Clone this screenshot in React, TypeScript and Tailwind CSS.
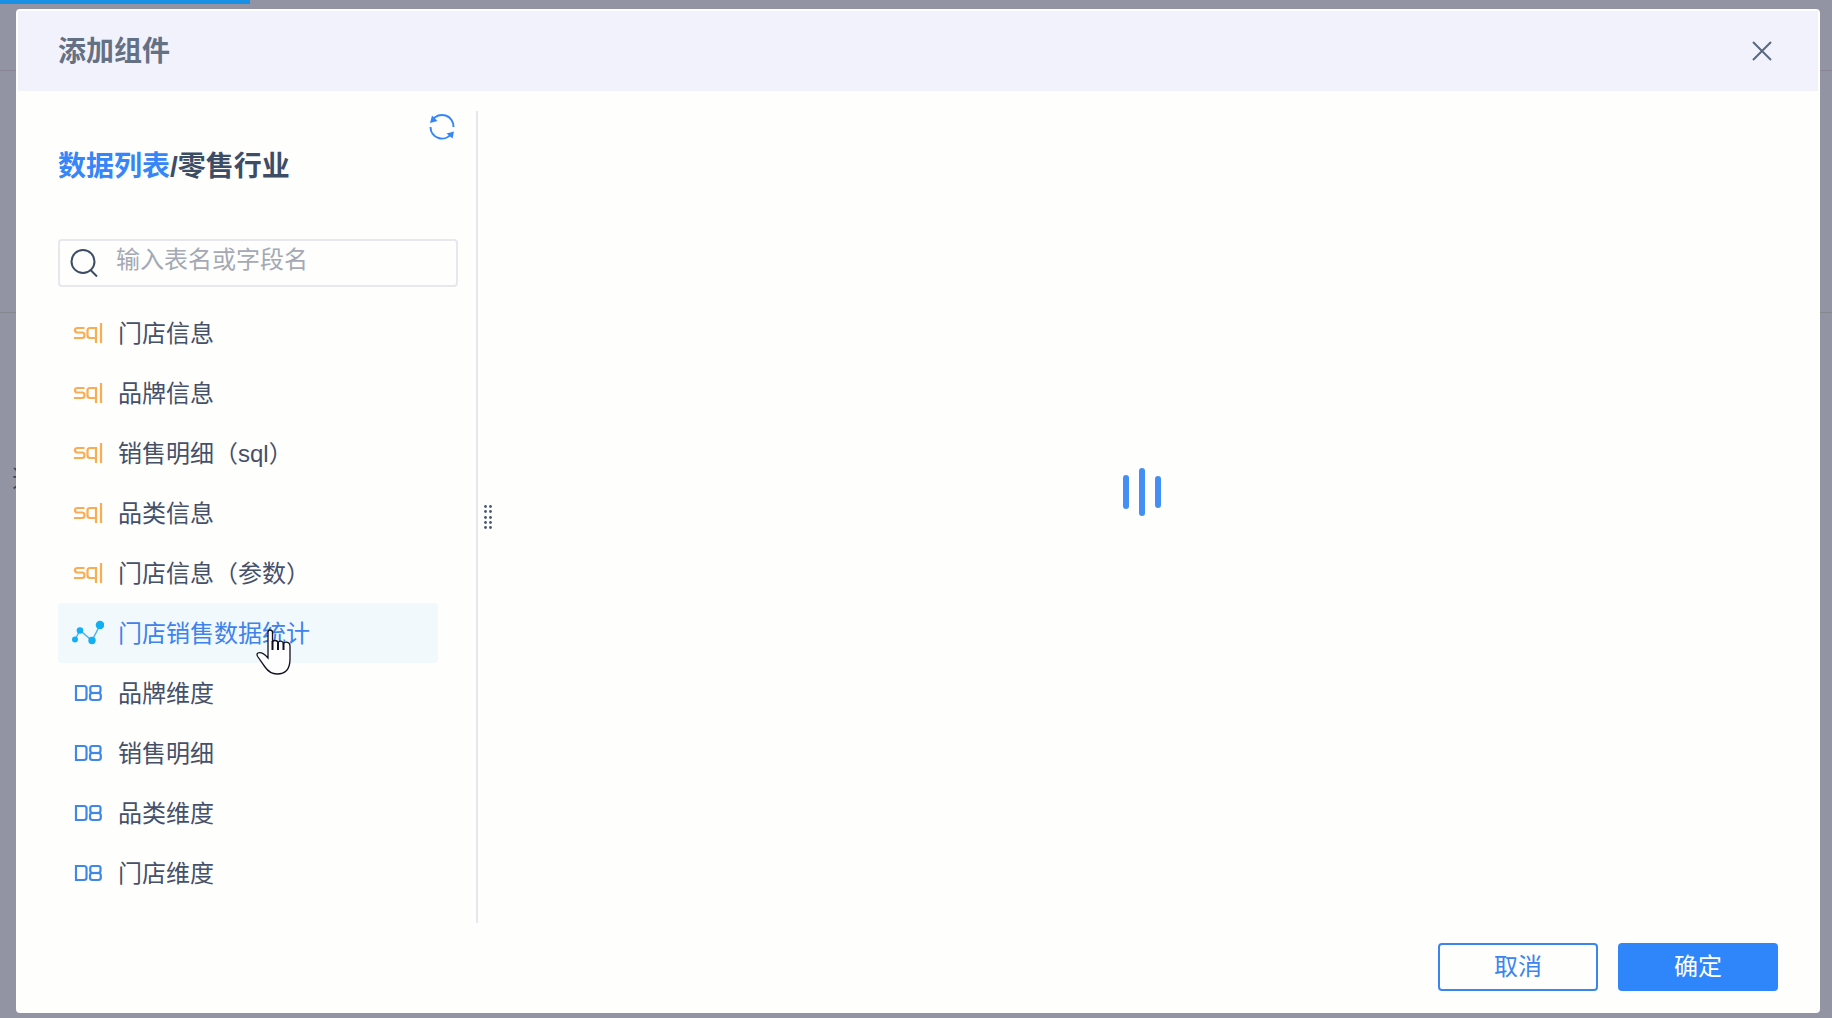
import { useState } from "react";

type SourceType = "sql" | "chart" | "db";

interface DataTable {
    id: number;
    name: string;
    type: SourceType;
}

const tables: DataTable[] = [
    { id: 1, name: "门店信息", type: "sql" },
    { id: 2, name: "品牌信息", type: "sql" },
    { id: 3, name: "销售明细（sql）", type: "sql" },
    { id: 4, name: "品类信息", type: "sql" },
    { id: 5, name: "门店信息（参数）", type: "sql" },
    { id: 6, name: "门店销售数据统计", type: "chart" },
    { id: 7, name: "品牌维度", type: "db" },
    { id: 8, name: "销售明细", type: "db" },
    { id: 9, name: "品类维度", type: "db" },
    { id: 10, name: "门店维度", type: "db" },
];

function SourceIcon({ type }: { type: SourceType }) {
    if (type === "sql") {
        return (
            <svg viewBox="0 0 32 32" className="w-8 h-8" fill="none" stroke="#fbab52" strokeWidth="2.2" aria-hidden="true">
                <path d="M12.5 11H5.5Q3 11 3 13V13.5Q3 15.5 5.5 15.5H10Q12.5 15.5 12.5 18V18.5Q12.5 21 10 21H2" />
                <path d="M24 26V11H18Q15.5 11 15.5 13.5V18.5Q15.5 21 18 21H23" />
                <path d="M29 6V26" />
            </svg>
        );
    }

    if (type === "chart") {
        return (
            <svg viewBox="0 0 32 32" className="w-8 h-8" fill="#12b0f0" aria-hidden="true">
                <path d="M3 22.5L8 13.5L20 23.5L28 8" fill="none" stroke="#4db4f2" strokeWidth="1.5" />
                <circle cx="3" cy="22.5" r="3" />
                <circle cx="8" cy="13.5" r="3.3" />
                <circle cx="20" cy="23.5" r="3.7" />
                <circle cx="28" cy="8" r="4.3" />
            </svg>
        );
    }

    return (
        <svg viewBox="0 0 32 32" className="w-8 h-8" fill="none" stroke="#4088e8" strokeWidth="2.2" aria-hidden="true">
            <path d="M4 9H12Q14.5 9 14.5 11.5V20.5Q14.5 23 12 23H4Z" />
            <path d="M20.5 9H26.5Q28.5 9 28.5 11V13.5Q28.5 16 26 16Q28.8 16 28.8 18.5V20.5Q28.8 23 26.3 23H20.5Q18 23 18 20.5V18.5Q18 16 20.5 16Q18.3 16 18.3 13.5V11Q18.3 9 20.5 9Z" />
            <path d="M20 16H27" />
        </svg>
    );
}

export default function App() {
    const [keyword, setKeyword] = useState("");
    const [selected, setSelected] = useState(6);
    const progress = 250 / 18.32;

    const visible = tables.filter((table) => table.name.includes(keyword));

    return (
        <div className="min-h-screen bg-[#9294a3] font-['Liberation_Sans','Noto_Sans_CJK_SC',sans-serif]">

            {/* page behind the dialog */}
            <div className="h-[71px] border-b border-[#8a8494]"></div>
            <div className="h-[242px] border-b border-[#85878f]"></div>
            <p className="pl-3 pt-[152px] text-2xl leading-7 text-[#3f4352]">选</p>

            <div className="fixed inset-x-0 top-0 h-1 z-20">
                <div className="h-full bg-[#1890e6]" style={{ width: `${progress}%` }}></div>
            </div>

            <div className="fixed inset-0 z-10 flex pl-4 pr-3 pt-[9px] pb-[5px]">
                <div role="dialog" aria-labelledby="dialog-title" className="flex-1 flex flex-col bg-[#fefefd] border-2 border-[#fefefd] rounded">

                    <div className="h-20 shrink-0 flex items-center justify-between pl-10 pr-11 bg-[#f1f2fb]">
                        <h1 id="dialog-title" className="pt-0.5 text-[28px] leading-10 font-bold text-[#647083]">添加组件</h1>
                        <button type="button" aria-label="关闭" className="w-6 h-6">
                            <svg viewBox="0 0 24 24" className="w-6 h-6" fill="none" stroke="#59687f" strokeWidth="2">
                                <path d="M3 3L21 21M21 3L3 21" />
                            </svg>
                        </button>
                    </div>

                    <div className="flex-1 min-h-0 flex pt-5">
                        <aside className="w-[460px] shrink-0 pl-10 pr-[18px] border-r-2 border-[#e7e8ee]">
                            <div className="flex justify-end">
                                <button type="button" aria-label="刷新" className="w-8 h-8 flex items-center justify-center">
                                    <svg viewBox="0 0 32 32" className="w-8 h-8" fill="none" stroke="#3585f8" strokeWidth="2">
                                        <path d="M6.5 9A11.5 11.5 0 0 1 27.5 16" />
                                        <path d="M25.5 22.5A11.5 11.5 0 0 1 4.5 16" />
                                        <path d="M6 4.5L11.5 10L4 12Z" fill="#3585f8" stroke="none" />
                                        <path d="M28 20.5L26.5 27.5L20.5 22.5Z" fill="#3585f8" stroke="none" />
                                    </svg>
                                </button>
                            </div>

                            <h2 className="mt-1 text-[28px] leading-10 font-bold text-[#3d4d66]">
                                <a href="#list" className="text-[#3685f9]">数据列表</a>/零售行业
                            </h2>

                            <div className="mt-13 h-12 flex items-center border-2 border-[#e7e8ee] rounded">
                                <svg viewBox="0 0 32 32" className="w-8 h-8 ml-2 shrink-0" fill="none" stroke="#3d4d66" strokeWidth="2" aria-hidden="true">
                                    <circle cx="15" cy="14.5" r="11.5" />
                                    <path d="M22 22.5L29 29.5" />
                                </svg>
                                <input
                                    type="text"
                                    aria-label="搜索"
                                    value={keyword}
                                    onChange={(e) => setKeyword(e.target.value)}
                                    className="flex-1 min-w-0 h-11 pl-4 pb-1.5 text-2xl leading-9 text-[#3d4d66] placeholder-[#a4a9b5] outline-none"
                                    placeholder="输入表名或字段名"
                                />
                            </div>

                            <ul className="mt-4 mr-5">
                                {visible.map((table) => (
                                    <li key={table.id} className="relative">
                                        <button
                                            type="button"
                                            onClick={() => setSelected(table.id)}
                                            className={`w-full h-[60px] flex items-center gap-3.5 pl-3.5 rounded text-2xl text-left ${selected === table.id ? "bg-[#f2f9fd] text-[#4082ec]" : "text-[#465069]"}`}
                                        >
                                            <SourceIcon type={table.type} />
                                            <span className="pt-0.5">{table.name}</span>
                                        </button>
                                        {selected === table.id && (
                                            <svg viewBox="0 0 36 48" className="absolute left-[198px] top-[25px] w-9 h-12 pointer-events-none" fill="#fefefe" stroke="#111122" strokeWidth="1.3" aria-hidden="true">
                                                <path d="M12 28V4.5Q12 2 14 2Q16.5 2 16.5 4.5V14Q17 12.5 19 12.5Q21.5 12.5 22 14.5Q23 13 25 13.2Q27 13.5 27.5 15.5Q28.5 14 30.5 14.2Q34 14.8 34 18V31Q34 46 21 46Q14 46 9 39L2 29Q0 26 2 25Q6 23.5 12 30Z" />
                                                <path d="M16.5 13V22M22 14V22M27.5 15V22" strokeWidth="2" />
                                            </svg>
                                        )}
                                    </li>
                                ))}
                            </ul>
                        </aside>

                        <button type="button" aria-label="调整宽度" className="w-5 flex items-center justify-center">
                            <svg viewBox="0 0 10 26" className="w-[10px] h-[26px]" fill="#4b5670">
                                {[2, 7, 13, 18, 23].map((y) => (
                                    <g key={y}>
                                        <circle cx="2.5" cy={y + 0.5} r="1.4" />
                                        <circle cx="7.5" cy={y + 0.5} r="1.4" />
                                    </g>
                                ))}
                            </svg>
                        </button>

                        <section aria-label="加载中" className="flex-1 flex items-center justify-center pr-8 pb-[50px]">
                            <svg viewBox="0 0 40 50" className="w-10 h-[50px]" fill="#438ff5" aria-hidden="true">
                                <rect x="1" y="8" width="6" height="34" rx="3" />
                                <rect x="17" y="1" width="6" height="48" rx="3" />
                                <rect x="33" y="9" width="6" height="32" rx="3" />
                            </svg>
                        </section>
                    </div>

                    <div className="shrink-0 flex justify-end gap-5 pt-5 pb-5 pr-10">
                        <button type="button" className="w-40 h-12 border-2 border-[#3d85ee] rounded text-2xl text-[#3d85ee]">取消</button>
                        <button type="button" className="w-40 h-12 bg-[#2f86fb] rounded text-2xl text-white">确定</button>
                    </div>
                </div>
            </div>
        </div>
    );
}
